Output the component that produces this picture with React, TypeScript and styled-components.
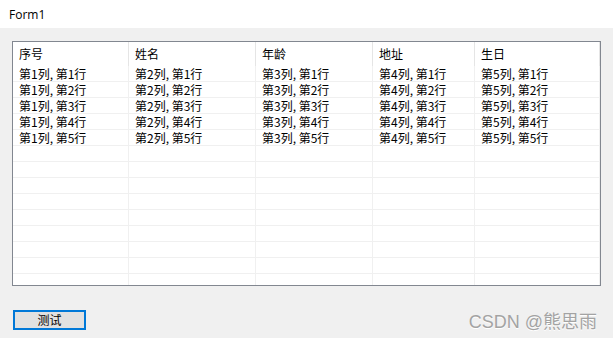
import styled, { createGlobalStyle } from "styled-components";

const columns = [
  { title: "序号", width: 116 },
  { title: "姓名", width: 127 },
  { title: "年龄", width: 117 },
  { title: "地址", width: 102 },
  { title: "生日", width: 125 },
];

const rows = [1, 2, 3, 4, 5];
const EMPTY_ROWS = 9;

const GlobalStyle = createGlobalStyle`
  html, body {
    margin: 0;
    padding: 0;
    background: #f0f0f0;
  }
  body {
    font-family: "Noto Sans CJK SC", "Noto Sans", sans-serif;
    font-size: 12px;
    color: #000;
  }
`;

const Window = styled.div`
  width: 613px;
  height: 338px;
  display: flex;
  flex-direction: column;
  background: #f0f0f0;
  overflow: hidden;
`;

const TitleBar = styled.div`
  height: 28px;
  flex: none;
  display: flex;
  align-items: center;
  padding-left: 9px;
  background: #fff;
  font-family: "Open Sans", "Noto Sans", sans-serif;
  font-size: 12px;
`;

const Content = styled.div`
  flex: 1;
  display: flex;
  flex-direction: column;
  padding: 13px 12px 0 12px;
`;

const ListView = styled.div`
  width: 587px;
  height: 243px;
  border: 1px solid #828790;
  background: #fff;
  overflow: hidden;
`;

const Row = styled.div<{ $header?: boolean }>`
  display: grid;
  grid-template-columns: ${columns.map((c) => `${c.width}px`).join(" ")};
  height: ${({ $header }) => ($header ? 24 : 16)}px;
  box-sizing: border-box;
  border-bottom: ${({ $header }) => ($header ? "none" : "1px solid #f0f0f0")};
`;

const Cell = styled.div<{ $header?: boolean }>`
  box-sizing: border-box;
  padding-left: ${({ $header }) => ($header ? 6 : 6)}px;
  border-right: 1px solid ${({ $header }) => ($header ? "#e5e5e5" : "#f0f0f0")};
  line-height: ${({ $header }) => ($header ? 24 : 15)}px;
  white-space: nowrap;
  overflow: hidden;
`;

const Footer = styled.div`
  display: flex;
  align-items: center;
  justify-content: space-between;
  margin-top: 21px;
  padding-left: 1px;
  padding-right: 4px;
`;

const Button = styled.button`
  width: 73px;
  height: 20px;
  box-sizing: border-box;
  border: 2px solid #0078d7;
  background: #e1e1e1;
  font-family: "Noto Sans CJK SC", sans-serif;
  font-size: 12px;
  padding: 0;
  line-height: 16px;
  color: #000;
`;

const Watermark = styled.div`
  font-family: "Liberation Sans", "Noto Sans CJK SC", sans-serif;
  font-size: 18px;
  color: #a3a3a3;
  text-shadow: 0 1px 0 #fff;
`;

export default function App() {
  return (
    <>
      <GlobalStyle />
      <Window>
        <TitleBar>Form1</TitleBar>
        <Content>
          <ListView>
            <Row $header>
              {columns.map((c) => (
                <Cell $header key={c.title}>{c.title}</Cell>
              ))}
            </Row>
            {rows.map((r) => (
              <Row key={r}>
                {columns.map((_, i) => (
                  <Cell key={i}>{`第${i + 1}列, 第${r}行`}</Cell>
                ))}
              </Row>
            ))}
            {Array.from({ length: EMPTY_ROWS }).map((_, r) => (
              <Row key={`e${r}`}>
                {columns.map((_, i) => (
                  <Cell key={i} />
                ))}
              </Row>
            ))}
          </ListView>
          <Footer>
            <Button>测试</Button>
            <Watermark>CSDN @熊思雨</Watermark>
          </Footer>
        </Content>
      </Window>
    </>
  );
}
